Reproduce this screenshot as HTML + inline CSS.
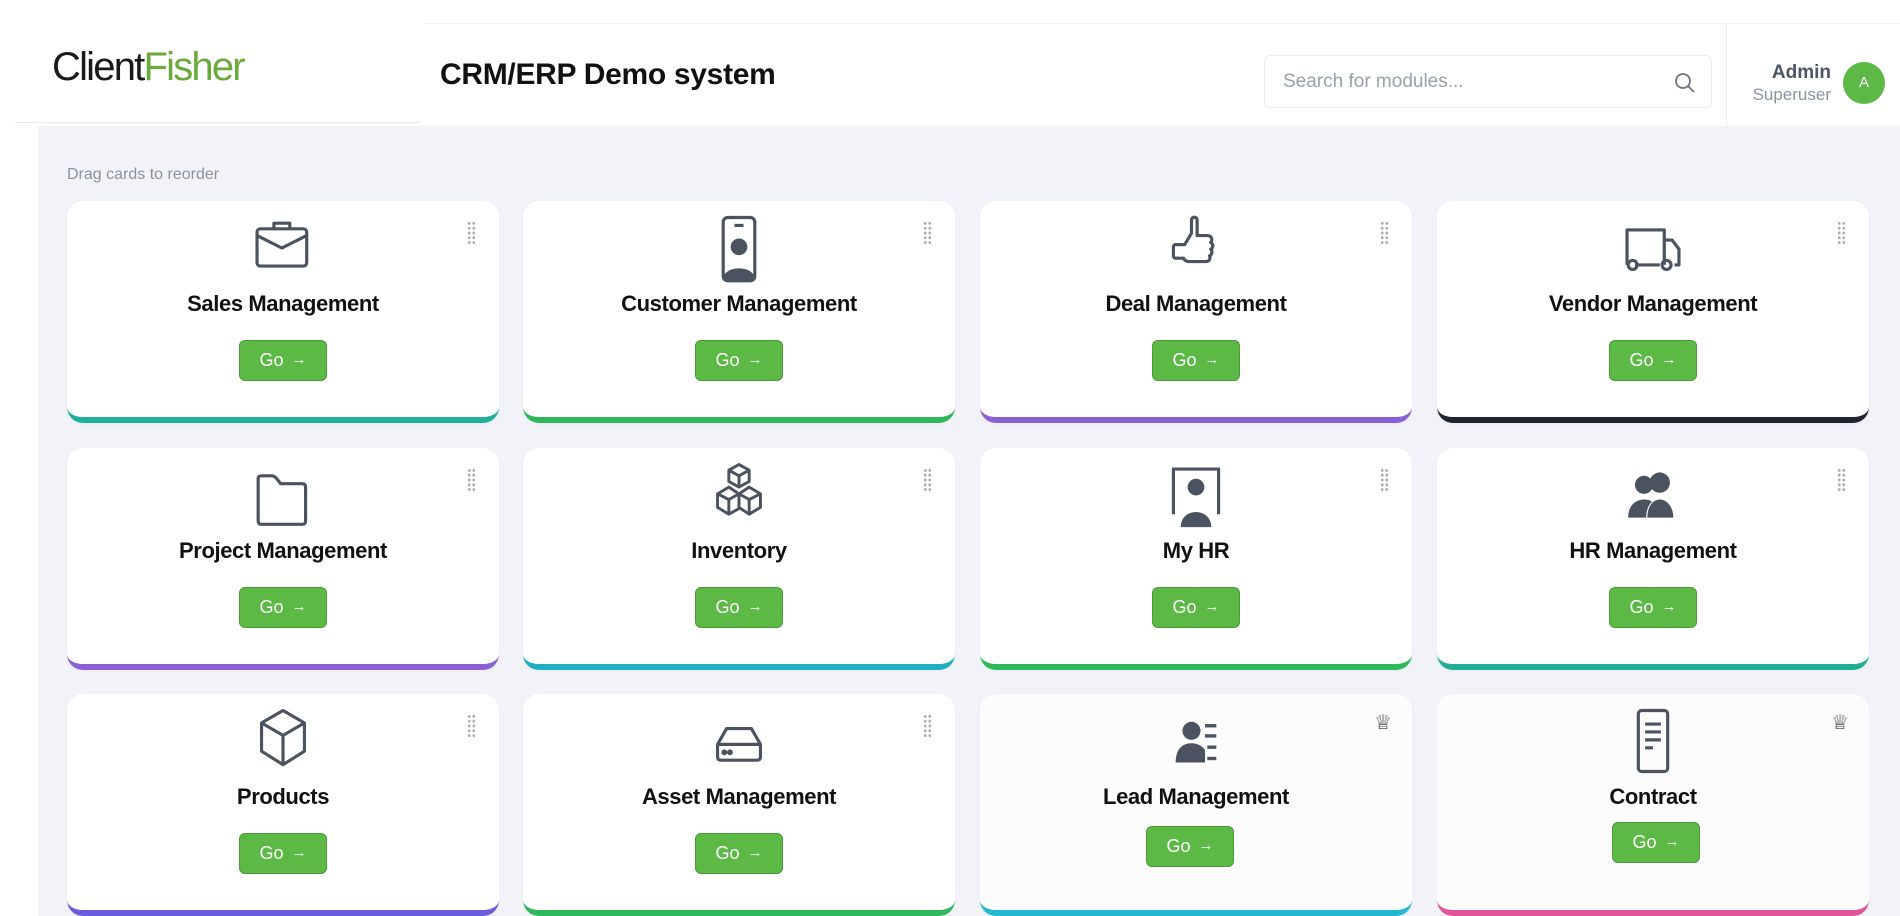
<!DOCTYPE html>
<html><head><meta charset="utf-8"><style>
*{box-sizing:border-box;margin:0;padding:0}
body{width:1900px;height:916px;overflow:hidden;background:#fff;font-family:"Liberation Sans",sans-serif;position:relative}
.main{position:absolute;left:38px;top:126px;right:0;bottom:0;background:#f1f3f8}
.topline{position:absolute;left:424px;right:0;top:23px;height:1px;background:#eef0f3}
.logoline{position:absolute;left:15px;width:405px;top:122px;height:1px;background:#e6e8ec}
.logo{position:absolute;left:52px;top:45px;font-size:40px;letter-spacing:-1.8px;color:#1a1a1a}
.logo span{color:#6aaa3a}
.title{position:absolute;left:440px;top:58px;font-size:30px;font-weight:700;color:#111;letter-spacing:-0.3px}
.search{position:absolute;left:1264px;top:55px;width:448px;height:53px;border:1px solid #eceef2;border-radius:6px;background:#fff}
.search .ph{position:absolute;left:18px;top:15px;font-size:19px;color:#9aa1ab}
.vdiv{position:absolute;left:1726px;top:24px;width:1px;height:102px;background:#eceef2}
.admin{position:absolute;right:69px;top:62px;text-align:right}
.admin b{display:block;font-size:19px;color:#4a5566;font-weight:600}
.admin i{display:block;font-style:normal;font-size:17px;color:#8a93a0;margin-top:1px}
.av{position:absolute;left:1843px;top:62px;width:42px;height:42px;border-radius:50%;background:#5cb946;color:#fff;font-size:15px;text-align:center;line-height:42px}
.drag{position:absolute;left:67px;top:166px;font-size:16px;color:#8a929c}
.card{position:absolute;width:432px;height:222px;background:#fff;border-radius:16px;border-bottom:6px solid;box-shadow:0 1px 3px rgba(0,0,0,.04)}
.card.pre{background:#fcfcfd}
.ic{position:absolute;left:180px;top:12px;width:72px;height:70px}
.ct{position:absolute;left:0;right:0;top:90px;text-align:center;font-size:22px;font-weight:700;color:#111;letter-spacing:-0.4px}
.go{position:absolute;left:172px;top:139px;width:88px;height:41px;background:#5cb946;border-radius:6px;color:#fff;font-size:18px;text-align:center;line-height:39px;border:1px solid #4a9a38}
.go s{text-decoration:none;font-size:15px;position:relative;top:-2px;margin-left:3px}
.h{position:absolute;right:23px;top:20px;width:9px;height:24px;background-image:radial-gradient(circle,#a9aeb6 1.3px,transparent 1.6px);background-size:4.5px 4.8px}
.crown{position:absolute;right:20px;top:16px;font-size:20px;color:#333}
</style></head><body>
<div class="topline"></div><div class="logoline"></div>
<div class="logo">Client<span>Fisher</span></div>
<div class="title">CRM/ERP Demo system</div>
<div class="search"><div class="ph">Search for modules...</div>
<svg style="position:absolute;left:408px;top:15px" width="24" height="24" viewBox="0 0 24 24" fill="none" stroke="#6b7380" stroke-width="1.8"><circle cx="10" cy="10" r="7"/><path d="M15 15l6 6"/></svg></div>
<div class="vdiv"></div>
<div class="admin"><b>Admin</b><i>Superuser</i></div>
<div class="av">A</div>
<div class="main"></div>
<div class="drag">Drag cards to reorder</div>

<!-- row1 -->
<div class="card" style="left:67px;top:201px;border-color:#22ae9c"><svg class="ic" viewBox="0 0 60 62" fill="none" stroke="#4b5260" stroke-width="2.8" stroke-linejoin="round"><rect x="7" y="14" width="44" height="33" rx="3"/><path d="M22 14V9h14v5M7 20l22 11 22-11"/></svg><div class="ct">Sales Management</div><div class="go">Go <s>→</s></div><div class="h"></div></div>
<div class="card" style="left:523px;top:201px;border-color:#2db85c"><svg class="ic" viewBox="0 0 60 62" fill="none" stroke="#4b5260" stroke-width="2.8"><rect x="16" y="4" width="28" height="56" rx="4"/><path d="M26 11h8"/><circle cx="30" cy="30" r="6" fill="#4b5260"/><path d="M17 58c2-10 24-10 26 0z" fill="#4b5260"/></svg><div class="ct">Customer Management</div><div class="go">Go <s>→</s></div><div class="h"></div></div>
<div class="card" style="left:980px;top:201px;border-color:#8b5fd6"><svg class="ic" viewBox="0 0 60 62" fill="none" stroke="#4b5260" stroke-width="2.8" stroke-linejoin="round"><path d="M12 28h8l6-10V6c0-3 5-3 5 0v14h9c4 0 5 4 3 6 3 2 2 5 0 6 2 2 1 5-1 6 1 2 0 5-3 5H24c-3 0-5-2-5-3H12c-2 0-2-2-2-2V30c0-2 2-2 2-2z"/></svg><div class="ct">Deal Management</div><div class="go">Go <s>→</s></div><div class="h"></div></div>
<div class="card" style="left:1437px;top:201px;border-color:#1f2430"><svg class="ic" viewBox="0 0 60 62" fill="none" stroke="#4b5260" stroke-width="2.8" stroke-linejoin="round"><path d="M7 46V15h33v31M40 24h7l6 8v14h-4M14 46h22"/><circle cx="12" cy="46" r="4"/><circle cx="42" cy="46" r="4"/></svg><div class="ct">Vendor Management</div><div class="go">Go <s>→</s></div><div class="h"></div></div>

<!-- row2 -->
<div class="card" style="left:67px;top:448px;border-color:#8b5fd6"><svg class="ic" viewBox="0 0 60 62" fill="none" stroke="#4b5260" stroke-width="2.8" stroke-linejoin="round"><path d="M8 16v38c0 2 1 3 3 3h36c2 0 3-1 3-3V24c0-2-1-3-3-3H28l-4-5c-1-1-2-2-4-2H11c-2 0-3 1-3 2z"/></svg><div class="ct">Project Management</div><div class="go">Go <s>→</s></div><div class="h"></div></div>
<div class="card" style="left:523px;top:448px;border-color:#22aec2"><svg class="ic" viewBox="0 0 60 62" fill="none" stroke="#4b5260" stroke-width="2.6" stroke-linejoin="round"><path d="M30 4l-9 5v10l9 5 9-5V9zM21 9l9 5 9-5M30 14v10"/><path d="M21 24l-10 6v12l10 6 9-5V30zM11 30l10 5 9-5M21 35v13"/><path d="M39 24l-9 6v12l9 6 10-6V30zM30 30l9 5 10-5M39 35v13"/></svg><div class="ct">Inventory</div><div class="go">Go <s>→</s></div><div class="h"></div></div>
<div class="card" style="left:980px;top:448px;border-color:#2db85c"><svg class="ic" viewBox="0 0 60 62" fill="none" stroke="#4b5260" stroke-width="2.8"><path d="M10 48V8h40v40"/><circle cx="30" cy="24" r="6" fill="#4b5260"/><path d="M18 58c1-14 23-14 24 0z" fill="#4b5260"/></svg><div class="ct">My HR</div><div class="go">Go <s>→</s></div><div class="h"></div></div>
<div class="card" style="left:1437px;top:448px;border-color:#22ae94"><svg class="ic" viewBox="0 0 60 62" fill="#4b5260"><circle cx="22" cy="22" r="8"/><circle cx="36" cy="20" r="9"/><path d="M8 51c0-12 8-16 14-16 4 0 6 1 7 2-4 4-5 9-5 14z"/><path d="M25 51c0-10 5-16 11-16s12 6 12 16z"/></svg><div class="ct">HR Management</div><div class="go">Go <s>→</s></div><div class="h"></div></div>

<!-- row3 -->
<div class="card" style="left:67px;top:694px;border-color:#6a5ee0"><svg class="ic" viewBox="0 0 60 62" fill="none" stroke="#4b5260" stroke-width="2.8" stroke-linejoin="round"><path d="M30 4l-19 11v25l19 12 19-12V15zM11 15l19 11 19-11M30 26v26"/></svg><div class="ct">Products</div><div class="go">Go <s>→</s></div><div class="h"></div></div>
<div class="card" style="left:523px;top:694px;border-color:#2db85c"><svg class="ic" viewBox="0 0 60 62" fill="none" stroke="#4b5260" stroke-width="2.8" stroke-linejoin="round"><path d="M19 20h22l8 14v11c0 2-1 3-3 3H14c-2 0-3-1-3-3V34zM11 34h38"/><circle cx="17" cy="41" r="1.2" fill="#4b5260"/><circle cx="22" cy="41" r="1.2" fill="#4b5260"/></svg><div class="ct">Asset Management</div><div class="go">Go <s>→</s></div><div class="h"></div></div>
<div class="card pre" style="left:980px;top:694px;border-color:#22b8d0"><svg class="ic" viewBox="0 0 60 62" fill="#4b5260"><circle cx="26" cy="22" r="8"/><path d="M12 50c0-14 8-17 14-17s10 3 12 6v11z"/><rect x="38" y="16" width="10" height="3"/><rect x="38" y="25" width="10" height="3"/><rect x="40" y="35" width="8" height="3"/><rect x="40" y="45" width="8" height="3"/></svg><div class="ct">Lead Management</div><div class="go" style="left:166px;top:132px">Go <s>→</s></div><div class="crown">♕</div></div>
<div class="card pre" style="left:1437px;top:694px;border-color:#e0559a"><svg class="ic" viewBox="0 0 60 62" fill="none" stroke="#4b5260" stroke-width="2.8"><rect x="17" y="4" width="26" height="54" rx="3"/><path d="M23 16h14M23 23h14M23 30h14M23 37h7"/></svg><div class="ct">Contract</div><div class="go" style="left:175px;top:128px">Go <s>→</s></div><div class="crown">♕</div></div>
</body></html>
